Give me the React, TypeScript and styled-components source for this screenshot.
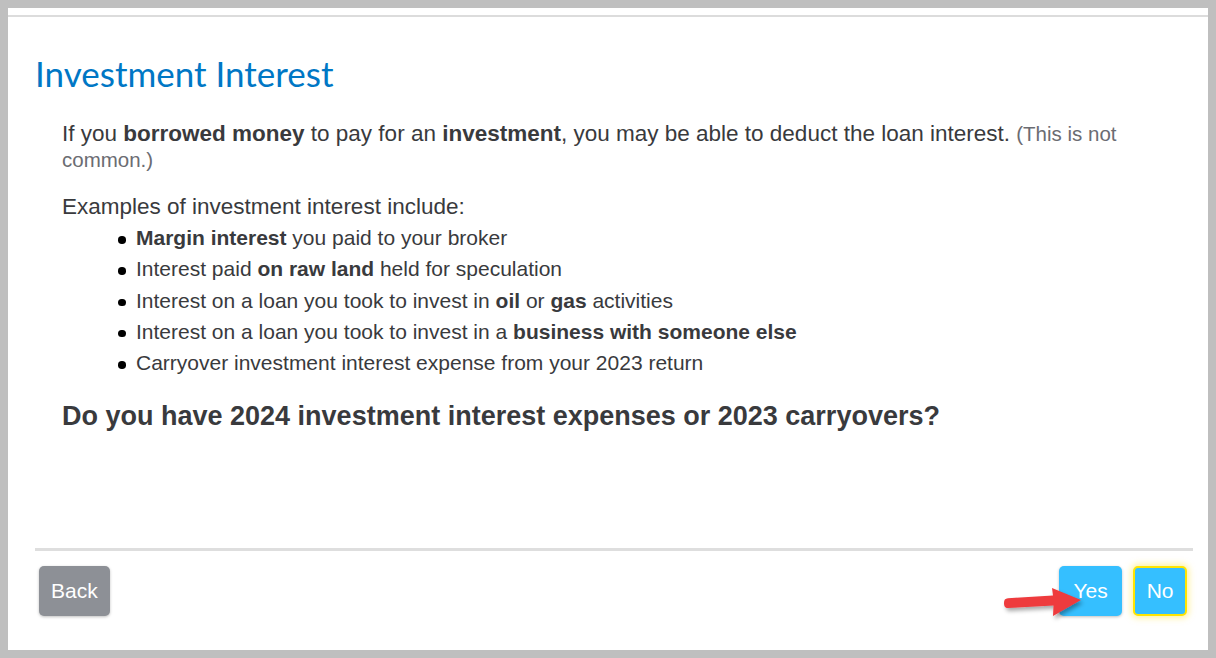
import React from 'react';
import styled, { createGlobalStyle } from 'styled-components';

const GlobalStyle = createGlobalStyle`
  html, body {
    margin: 0;
    padding: 0;
    background: #bfbfbf;
  }
`;

const Frame = styled.div`
  width: 1216px;
  height: 658px;
  box-sizing: border-box;
  padding: 8px;
`;

const Panel = styled.div`
  position: relative;
  height: 100%;
  background: #fff;
  box-sizing: border-box;
  padding-top: 7px;
  display: flex;
  flex-direction: column;
`;

const TopRule = styled.div`
  height: 2px;
  background: #dcdcdc;
`;

const Content = styled.div`
  flex: 1;
  padding: 0 27px;
`;

const Title = styled.h1`
  margin: 36px 0 0;
  font-family: Lato, 'Open Sans', sans-serif;
  font-weight: 400;
  font-size: 35px;
  line-height: 40px;
  color: #0077c5;
`;

const Body = styled.div`
  padding-left: 27px;
  padding-right: 30px;
  font-family: 'Liberation Sans', Arial, sans-serif;
  color: #393a3d;
`;

const Lead = styled.p`
  margin: 28px 0 0;
  font-size: 22.5px;
  line-height: 26px;
`;

const Aside = styled.span`
  font-size: 20.5px;
  color: #6b6c72;
`;

const Intro = styled.p`
  margin: 21px 0 0;
  font-size: 22.5px;
  line-height: 26px;
`;

const List = styled.ul`
  margin: 2px 0 0;
  padding-left: 74px;
  font-size: 21px;
  line-height: 31.25px;
  list-style: none;
`;

const Item = styled.li`
  position: relative;
  &::before {
    content: '';
    position: absolute;
    left: -18px;
    top: 14px;
    width: 7.5px;
    height: 7.5px;
    border-radius: 50%;
    background: #000;
  }
`;

const Question = styled.h2`
  margin: 21.5px 0 0;
  font-size: 27px;
  line-height: 32px;
  font-weight: 700;
`;

const Footer = styled.div`
  margin: 0 15px 0 27px;
  border-top: 3px solid #dedede;
  padding: 15px 6px 0 4px;
  height: 102px;
  box-sizing: border-box;
  display: flex;
  justify-content: space-between;
  align-items: flex-start;
`;

const Actions = styled.div`
  display: flex;
  gap: 11px;
  position: relative;
`;

const Button = styled.button<{ $tone: 'gray' | 'blue'; $focus?: boolean }>`
  height: 50px;
  padding: 0 ${({ $tone, $focus }) => ($tone === 'gray' ? '12px' : $focus ? '11.5px' : '14.5px')};
  border-radius: 5px;
  border: ${({ $focus }) => ($focus ? '2px solid #ffe500' : 'none')};
  box-shadow: ${({ $focus }) =>
    $focus ? '0 0 6px 2px rgba(255, 230, 80, 0.55)' : '0 1px 3px rgba(0,0,0,0.25)'};
  background: ${({ $tone }) => ($tone === 'gray' ? '#8d9096' : '#35bfff')};
  color: #fff;
  font-family: 'Liberation Sans', Arial, sans-serif;
  font-size: 21px;
  cursor: pointer;
`;

const Arrow = styled.svg`
  position: absolute;
  left: -60px;
  top: 15px;
  width: 90px;
  height: 45px;
  overflow: visible;
`;

export default function App() {
  return (
    <>
      <GlobalStyle />
      <Frame>
        <Panel>
          <TopRule />
          <Content>
            <Title>Investment Interest</Title>
            <Body>
              <Lead>
                If you <b>borrowed money</b> to pay for an <b>investment</b>, you may be able to deduct the loan
                interest. <Aside>(This is not common.)</Aside>
              </Lead>
              <Intro>Examples of investment interest include:</Intro>
              <List>
                <Item>
                  <b>Margin interest</b> you paid to your broker
                </Item>
                <Item>
                  Interest paid <b>on raw land</b> held for speculation
                </Item>
                <Item>
                  Interest on a loan you took to invest in <b>oil</b> or <b>gas</b> activities
                </Item>
                <Item>
                  Interest on a loan you took to invest in a <b>business with someone else</b>
                </Item>
                <Item>Carryover investment interest expense from your 2023 return</Item>
              </List>
              <Question>Do you have 2024 investment interest expenses or 2023 carryovers?</Question>
            </Body>
          </Content>
          <Footer>
            <Button $tone="gray">Back</Button>
            <Actions>
              <Button $tone="blue">Yes</Button>
              <Button $tone="blue" $focus>
                No
              </Button>
              <Arrow viewBox="0 0 90 45">
                <defs>
                  <filter id="arrowShadow" x="-20%" y="-40%" width="140%" height="180%">
                    <feDropShadow dx="2" dy="3" stdDeviation="2" floodColor="#000" floodOpacity="0.35" />
                  </filter>
                </defs>
                <g filter="url(#arrowShadow)">
                  <path
                    d="M5 22 C5 19 6 17.5 9 17.3 L54 14.5 L53 7 L82 19 L54 35 L54.5 24.5 L9 27 C6 27 5 25 5 22 Z"
                    fill="#ee3a3d"
                  />
                </g>
              </Arrow>
            </Actions>
          </Footer>
        </Panel>
      </Frame>
    </>
  );
}
